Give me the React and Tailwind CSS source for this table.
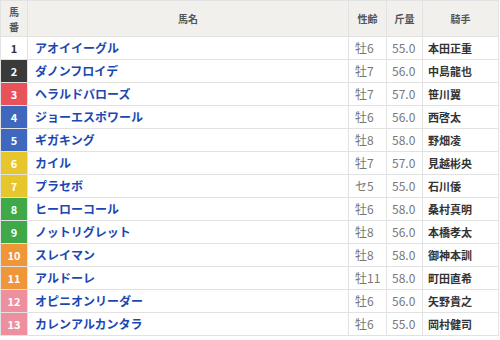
import React from "react";

const rows = [
  [1, "アオイイーグル", "牡6", "55.0", "本田正重"],
  [2, "ダノンフロイデ", "牡7", "56.0", "中島龍也"],
  [3, "ヘラルドバローズ", "牡7", "57.0", "笹川翼"],
  [4, "ジョーエスポワール", "牡6", "56.0", "西啓太"],
  [5, "ギガキング", "牡8", "58.0", "野畑凌"],
  [6, "カイル", "牡7", "57.0", "見越彬央"],
  [7, "プラセボ", "セ5", "55.0", "石川倭"],
  [8, "ヒーローコール", "牡6", "58.0", "桑村真明"],
  [9, "ノットリグレット", "牡8", "56.0", "本橋孝太"],
  [10, "スレイマン", "牡8", "58.0", "御神本訓"],
  [11, "アルドーレ", "牡11", "58.0", "町田直希"],
  [12, "オピニオンリーダー", "牡6", "56.0", "矢野貴之"],
  [13, "カレンアルカンタラ", "牡6", "55.0", "岡村健司"],
];

const numCls = {
  1: "bg-white text-[#333]",
  2: "bg-[#3a3a3a] text-white",
  3: "bg-[#e8525a] text-white",
  4: "bg-[#3e67bd] text-white",
  5: "bg-[#3e67bd] text-white",
  6: "bg-[#e7c52c] text-white",
  7: "bg-[#e7c52c] text-white",
  8: "bg-[#3fa94a] text-white",
  9: "bg-[#3fa94a] text-white",
  10: "bg-[#ee9638] text-white",
  11: "bg-[#ee9638] text-white",
  12: "bg-[#ee8fa0] text-white",
  13: "bg-[#ee8fa0] text-white",
};

export default function App() {
  return (
    <div
      className="w-[500px] h-[340px] bg-white"
      style={{ fontFamily: '"Noto Sans CJK JP", "Noto Sans", sans-serif' }}
    >
      <table className="w-[498px] border-collapse table-fixed border border-[#e2e2e2]">
        <colgroup>
          <col className="w-[27px]" />
          <col className="w-[321px]" />
          <col className="w-[38px]" />
          <col className="w-[36px]" />
          <col className="w-[76px]" />
        </colgroup>
        <thead>
          <tr className="h-[36px] bg-[#f1f0ec] text-[10px] font-bold text-[#555]">
            <th className="border border-[#e2e2e2] p-0 font-bold">
              <div className="flex flex-col items-center leading-[15px]">
                <span>馬</span>
                <span>番</span>
              </div>
            </th>
            <th className="border border-[#e2e2e2] font-bold">馬名</th>
            <th className="border border-[#e2e2e2] font-bold">性齢</th>
            <th className="border border-[#e2e2e2] font-bold">斤量</th>
            <th className="border border-[#e2e2e2] font-bold">騎手</th>
          </tr>
        </thead>
        <tbody>
          {rows.map(([n, name, sex, w, j]) => (
            <tr key={n} className="h-[23px]">
              <td
                className={`border border-[#e2e2e2] text-center text-[11px] font-bold p-0 ${numCls[n]}`}
              >
                {n}
              </td>
              <td className="border border-[#e2e2e2] pl-[7px] text-[12px] font-bold text-[#1b48b0] p-0 whitespace-nowrap">
                {name}
              </td>
              <td className="border border-[#e2e2e2] pl-[6px] text-[12px] text-[#777] p-0">
                {sex}
              </td>
              <td className="border border-[#e2e2e2] pl-[5px] text-[12px] text-[#777] p-0">
                {w}
              </td>
              <td className="border border-[#e2e2e2] pl-[5px] text-[11px] font-bold text-[#333] p-0 whitespace-nowrap">
                {j}
              </td>
            </tr>
          ))}
        </tbody>
      </table>
    </div>
  );
}
